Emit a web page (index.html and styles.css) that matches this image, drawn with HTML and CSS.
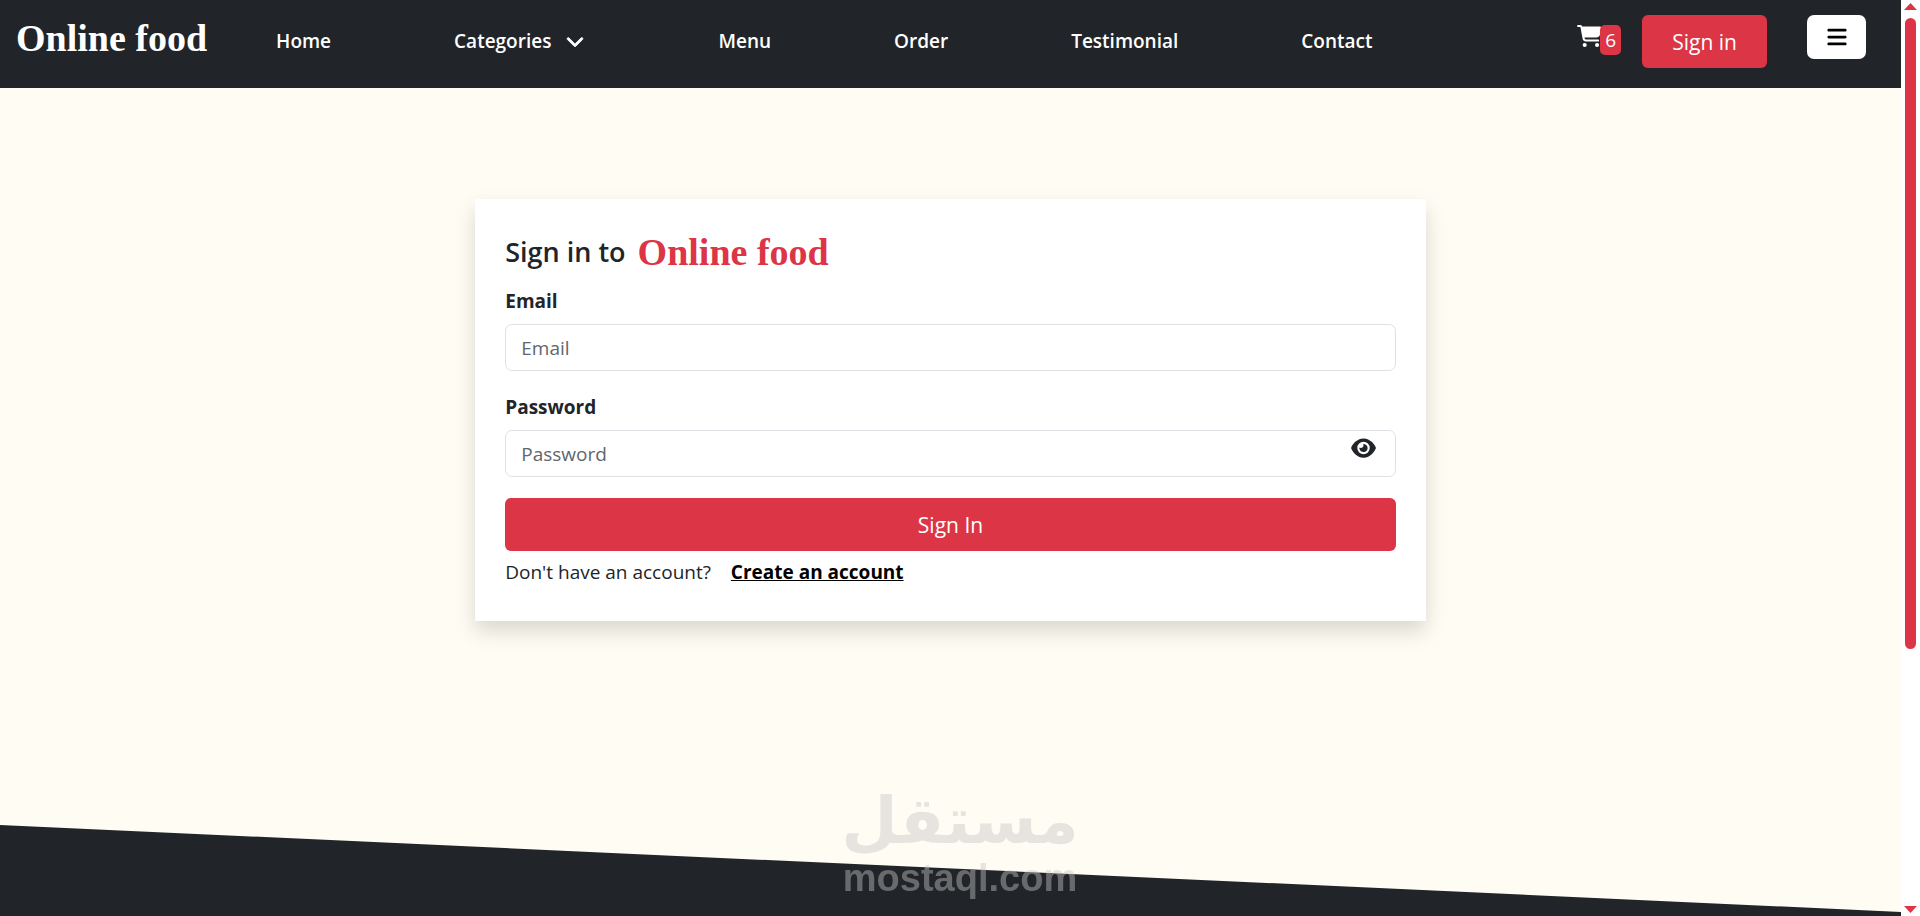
FILE: index.html
```html
<!DOCTYPE html>
<html lang="en">
<head>
    <meta charset="UTF-8">
    <meta name="viewport" content="width=device-width, initial-scale=1.0">
    <title>Online food - Sign in</title>
    <link rel="stylesheet" href="styles.css">
</head>
<body>
    <div class="page">
        <header class="navbar">
            <a class="brand" href="#">Online food</a>
            <nav class="nav-links">
                <a href="#">Home</a>
                <a class="dropdown" href="#">Categories
                    <svg class="chevron" viewBox="0 0 512 512" aria-hidden="true"><path d="M233.400 406.600c12.500 12.500 32.800 12.500 45.300 0l192-192c12.500-12.500 12.500-32.800 0-45.300s-32.800-12.500-45.300 0L256 338.700 86.600 169.400c-12.500-12.500-32.800-12.500-45.300 0s-12.500 32.800 0 45.300l192 192z"/></svg>
                </a>
                <a href="#">Menu</a>
                <a href="#">Order</a>
                <a href="#">Testimonial</a>
                <a href="#">Contact</a>
            </nav>
            <div class="nav-actions">
                <a class="cart" href="#" aria-label="Cart">
                    <svg class="cart-icon" viewBox="0 0 576 512" aria-hidden="true"><path d="M0 24C0 10.700 10.700 0 24 0H69.500c22 0 41.500 12.800 50.600 32h411c26.300 0 45.500 25 38.600 50.400l-41 152.300c-8.500 31.400-37 53.300-69.500 53.300H170.700l5.400 28.500c2.200 11.300 12.100 19.500 23.600 19.500H488c13.300 0 24 10.700 24 24s-10.700 24-24 24H199.700c-34.600 0-64.300-24.600-70.700-58.500L77.400 54.500c-.7-3.800-4-6.500-7.900-6.500H24C10.700 48 0 37.300 0 24zM128 464a48 48 0 1 1 96 0 48 48 0 1 1-96 0zm336-48a48 48 0 1 1 0 96 48 48 0 1 1 0-96z"/></svg>
                    <span class="badge">6</span>
                </a>
                <button class="btn" type="button">Sign in</button>
                <button class="toggle" type="button" aria-label="Open menu">
                    <svg class="bars" viewBox="0 0 448 512" aria-hidden="true"><path d="M0 96C0 78.300 14.300 64 32 64H416c17.700 0 32 14.300 32 32s-14.300 32-32 32H32C14.300 128 0 113.700 0 96zM0 256c0-17.700 14.300-32 32-32H416c17.700 0 32 14.300 32 32s-14.300 32-32 32H32c-17.700 0-32-14.300-32-32zM448 416c0 17.700-14.300 32-32 32H32c-17.700 0-32-14.300-32-32s14.300-32 32-32H416c17.700 0 32 14.300 32 32z"/></svg>
                </button>
            </div>
        </header>

        <main class="content">
            <form class="card">
                <h1 class="title">Sign in to <span class="title-brand">Online food</span></h1>
                <div class="field">
                    <label for="email">Email</label>
                    <input type="email" id="email" placeholder="Email">
                </div>
                <div class="field">
                    <label for="password">Password</label>
                    <div class="password-box">
                        <input type="password" id="password" placeholder="Password">
                        <button class="show-password" type="button" aria-label="Show password">
                            <svg class="eye" viewBox="0 0 576 512" aria-hidden="true"><path d="M288 32c-80.800 0-145.500 36.800-192.600 80.600C48.600 156 17.300 208 2.500 243.700c-3.300 7.900-3.300 16.700 0 24.600C17.300 304 48.600 356 95.400 399.400C142.500 443.200 207.200 480 288 480s145.500-36.800 192.600-80.600c46.800-43.500 78.100-95.400 93-131.100c3.300-7.900 3.300-16.700 0-24.600c-14.900-35.700-46.200-87.700-93-131.100C433.500 68.800 368.800 32 288 32zM144 256a144 144 0 1 1 288 0 144 144 0 1 1-288 0zm144-64c0 35.300-28.700 64-64 64c-7.100 0-13.900-1.200-20.300-3.300c-5.500-1.800-11.900 1.600-11.700 7.400c.3 6.900 1.300 13.800 3.200 20.700c13.700 51.200 66.400 81.600 117.600 67.900s81.600-66.400 67.900-117.600c-11.100-41.500-47.800-69.400-88.600-71.100c-5.800-.2-9.200 6.100-7.400 11.700c2.100 6.400 3.300 13.200 3.300 20.300z"/></svg>
                        </button>
                    </div>
                </div>
                <button class="btn btn-block" type="submit">Sign In</button>
                <p class="register">Don't have an account? <a href="#">Create an account</a></p>
            </form>
        </main>

        <footer class="slope"></footer>
    </div>

    <div class="scrollbar" aria-hidden="true">
        <span class="arrow arrow-up"></span>
        <span class="thumb"></span>
        <span class="arrow arrow-down"></span>
    </div>

    <div class="watermark">
        <span class="watermark-ar" lang="ar" dir="rtl">مستقل</span>
        <span class="watermark-en">mostaql.com</span>
    </div>
</body>
</html>
```

FILE: styles.css
```css
* {
    box-sizing: border-box;
}
body {
    margin: 0;
    display: flex;
    min-height: 100vh;
    font-family: "Open Sans", "Noto Sans", sans-serif;
    font-size: 19px;
    line-height: 30px;
    color: #212529;
    background: #fffcf3;
}
a {
    color: inherit;
}
button, input {
    font-family: inherit;
}
svg {
    display: block;
    fill: currentColor;
}
.page {
    flex: 1;
    display: flex;
    flex-direction: column;
}

/* navbar */
.navbar {
    display: flex;
    align-items: flex-start;
    height: 88px;
    padding: 15px 35px 0 16px;
    background: #212529;
    color: #fff;
}
.brand, .title-brand {
    font-family: "Liberation Serif", serif;
    font-size: 38px;
    font-weight: bold;
}
.brand {
    line-height: 46px;
    text-decoration: none;
}
.nav-links {
    display: flex;
    gap: 123px;
    margin-left: 69px;
    padding-top: 11px;
    font-weight: 600;
}
.nav-links a {
    text-decoration: none;
}
.dropdown {
    display: flex;
    align-items: center;
    gap: 15px;
    margin-right: 11px;
}
.chevron {
    width: 18px;
    height: 18px;
    stroke: currentColor;
    stroke-width: 24;
}
.nav-actions {
    display: flex;
    align-items: flex-start;
    margin-left: auto;
}
.cart {
    display: flex;
    align-items: flex-start;
    margin-right: 21px;
    padding-top: 10px;
    text-decoration: none;
}
.cart-icon {
    width: 25px;
    height: 22px;
}
.badge {
    width: 21px;
    margin-left: -2px;
    border-radius: 5px;
    background: #dc3545;
    text-align: center;
}
.btn {
    height: 53px;
    padding: 0 30px;
    border: 0;
    border-radius: 6px;
    background: #dc3545;
    color: #fff;
    font-size: 21px;
}
.toggle {
    display: flex;
    align-items: center;
    justify-content: center;
    width: 59px;
    height: 44px;
    margin-left: 40px;
    border: 0;
    border-radius: 7px;
    background: #fff;
    color: #000;
}
.bars {
    width: 20px;
    height: 22px;
}

/* sign in card */
.content {
    flex: 1;
    padding-top: 111px;
}
.card {
    width: 50%;
    margin: 0 auto;
    padding: 30px;
    background: #fff;
    box-shadow: 0 10px 20px rgba(0, 0, 0, 0.15);
}
.title {
    display: flex;
    align-items: center;
    gap: 12px;
    margin: 0 0 11px;
    font-size: 27px;
    font-weight: 600;
    line-height: 46px;
}
.title-brand {
    color: #dc3545;
}
.field {
    display: flex;
    flex-direction: column;
    gap: 8px;
    margin-bottom: 21px;
}
.field label {
    font-weight: bold;
}
.field input {
    width: 100%;
    height: 47px;
    padding: 0 15px;
    border: 1px solid #dee2e6;
    border-radius: 7px;
    background: #fff;
    font-size: 19px;
}
.field input::placeholder {
    color: #5f666d;
}
.password-box {
    position: relative;
}
.show-password {
    position: absolute;
    top: 7px;
    right: 20px;
    padding: 0;
    border: 0;
    background: none;
    color: #212529;
}
.eye {
    width: 25px;
    height: 22px;
}
.btn-block {
    display: block;
    width: 100%;
}
.register {
    margin: 6px 0 4px;
}
.register a {
    margin-left: 15px;
    color: #000;
    font-weight: bold;
}

/* dark slope at the bottom */
.slope {
    height: 91px;
    background: #212529;
    clip-path: polygon(0 0, 100% 87px, 100% 100%, 0 100%);
}

/* scrollbar */
.scrollbar {
    display: flex;
    flex-direction: column;
    align-items: center;
    width: 19px;
    padding: 3px 0;
    background: #fff;
}
.arrow {
    width: 13px;
    height: 7px;
    background: #dc3545;
}
.arrow-up {
    clip-path: polygon(50% 0, 100% 100%, 0 100%);
}
.arrow-down {
    margin-top: auto;
    clip-path: polygon(0 0, 100% 0, 50% 100%);
}
.thumb {
    width: 11px;
    height: calc(70% - 6px);
    margin-top: 8px;
    border-radius: 6px;
    background: #dc3545;
}

/* watermark */
.watermark {
    position: fixed;
    left: 0;
    right: 0;
    bottom: 16px;
    display: flex;
    flex-direction: column;
    align-items: center;
    color: #c7c6c6;
    font-weight: bold;
    opacity: 0.43;
    pointer-events: none;
}
.watermark-ar {
    font-family: "DejaVu Sans", sans-serif;
    font-size: 65px;
    line-height: 70px;
}
.watermark-en {
    font-family: "Liberation Sans", sans-serif;
    font-size: 38px;
    line-height: 44px;
}
```
